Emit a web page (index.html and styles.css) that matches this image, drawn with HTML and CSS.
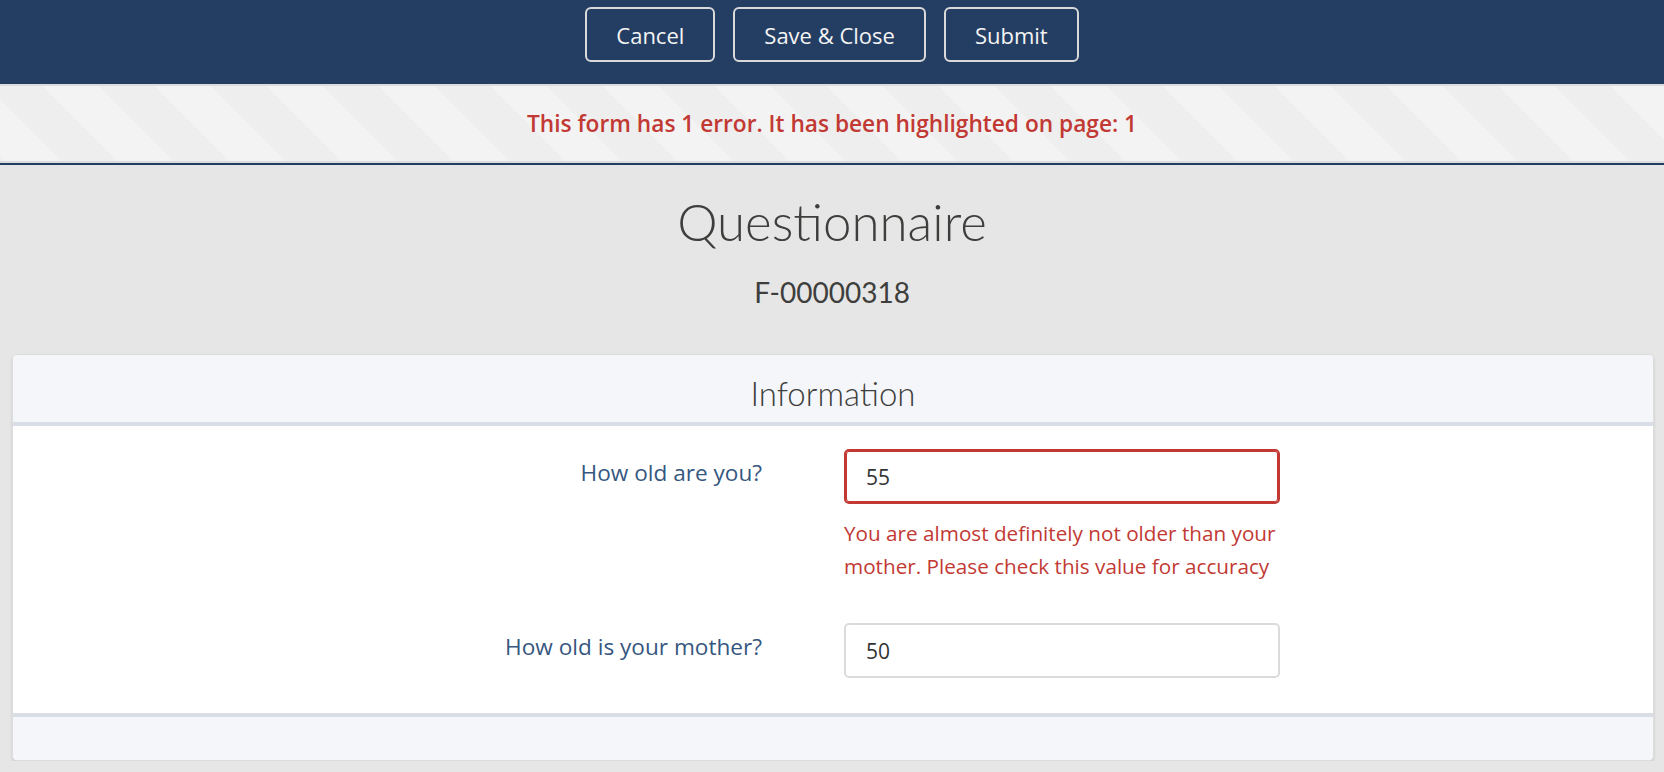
FILE: index.html
```html
<!DOCTYPE html>
<html lang="en">
<head>
    <meta charset="UTF-8">
    <meta name="viewport" content="width=device-width, initial-scale=1.0">
    <title>Questionnaire</title>
    <link rel="stylesheet" href="styles.css">
</head>
<body>

    <header class="toolbar">
        <button class="toolbar-btn">Cancel</button>
        <button class="toolbar-btn">Save &amp; Close</button>
        <button class="toolbar-btn">Submit</button>
    </header>

    <div class="error-banner">
        <div class="error-stripes">
            <p>This form has 1 error. It has been highlighted on page: 1</p>
        </div>
    </div>

    <main class="form-page">
        <h1 class="form-title">Questionnaire</h1>
        <p class="form-id">F-00000318</p>

        <section class="card">
            <h2 class="card-header">Information</h2>
            <div class="card-body">
                <div class="field-row">
                    <label class="field-label" for="age">How old are you?</label>
                    <div class="field">
                        <input class="input has-error" id="age" type="text" value="55">
                        <p class="error-msg">You are almost definitely not older than your<br>mother. Please check this value for accuracy</p>
                    </div>
                </div>
                <div class="field-row">
                    <label class="field-label" for="motherAge">How old is your mother?</label>
                    <div class="field">
                        <input class="input" id="motherAge" type="text" value="50">
                    </div>
                </div>
            </div>
            <div class="card-footer"></div>
        </section>
    </main>

</body>
</html>
```

FILE: styles.css
```css
body {
    margin: 0;
    font-family: "Open Sans", Lato, sans-serif;
    background-color: #e6e6e6;
    color: #3e3e3c;
}

/* top bar */
.toolbar {
    height: 84px;
    box-sizing: border-box;
    padding-top: 7px;
    background-color: #243e63;
    display: flex;
    justify-content: center;
    align-items: flex-start;
    gap: 18px;
}
.toolbar-btn {
    height: 55px;
    padding: 0 29px;
    background: transparent;
    border: 2px solid #d9d9d9;
    border-radius: 6px;
    color: #f4f4f4;
    font-family: inherit;
    font-size: 22px;
    cursor: pointer;
}

/* error banner */
.error-banner {
    border-bottom: 2px solid #243e63;
}
.error-stripes {
    height: 75px;
    border-top: 2px solid #dcdcdc;
    border-bottom: 2px solid #dcdcdc;
    background-color: #eeeeee;
    background-image: linear-gradient(45deg, #f3f3f3 25%, transparent 25%, transparent 50%, #f3f3f3 50%, #f3f3f3 75%, transparent 75%, transparent);
    background-size: 112px 112px;
    background-position: 43px 0;
    display: flex;
    align-items: center;
    justify-content: center;
}
.error-stripes p {
    margin: 0;
    color: #c23934;
    font-weight: 600;
    font-size: 22.7px;
}

/* heading */
.form-title {
    margin: 27px 0 0;
    text-align: center;
    font-family: Lato, sans-serif;
    font-weight: 300;
    font-size: 51px;
    line-height: 60px;
    color: #3e3e3c;
}
.form-id {
    margin: 24px 0 0;
    text-align: center;
    font-family: Lato, sans-serif;
    font-size: 28px;
    line-height: 32px;
}

/* card */
.card {
    margin: 46px 10px 0 12px;
    border: 1px solid #dcdcdc;
    border-radius: 5px;
    background-color: #fff;
    box-shadow: 0 2px 3px rgba(0, 0, 0, 0.12);
    overflow: hidden;
}
.card-header {
    margin: 0;
    padding-top: 10px;
    line-height: 57px;
    text-align: center;
    font-family: Lato, sans-serif;
    font-weight: 300;
    font-size: 33px;
    color: #3e3e3c;
    background-color: #f4f6f9;
    border-bottom: 4px solid #d8dde6;
}
.card-body {
    padding: 23px 0 35px;
    display: flex;
    flex-direction: column;
    gap: 40px;
}
.card-footer {
    height: 43px;
    background-color: #f4f6f9;
    border-top: 4px solid #d8dde6;
}

/* fields */
.field-row {
    display: grid;
    grid-template-columns: 749px 436px;
    column-gap: 82px;
}
.field-label {
    padding-top: 10px;
    text-align: right;
    font-size: 22.6px;
    line-height: 28px;
    color: #36577f;
}
.input {
    display: block;
    width: 100%;
    height: 55px;
    box-sizing: border-box;
    padding: 0 20px;
    border: 2px solid #dddbda;
    border-radius: 5px;
    font-family: inherit;
    font-size: 21px;
    color: #333;
    background-color: #fff;
}
.input.has-error {
    border-color: #c23934;
    box-shadow: inset 0 0 0 1px #c23934;
}
.error-msg {
    margin: 13px 0 0;
    color: #c23934;
    font-size: 20.7px;
    line-height: 33px;
}
```
